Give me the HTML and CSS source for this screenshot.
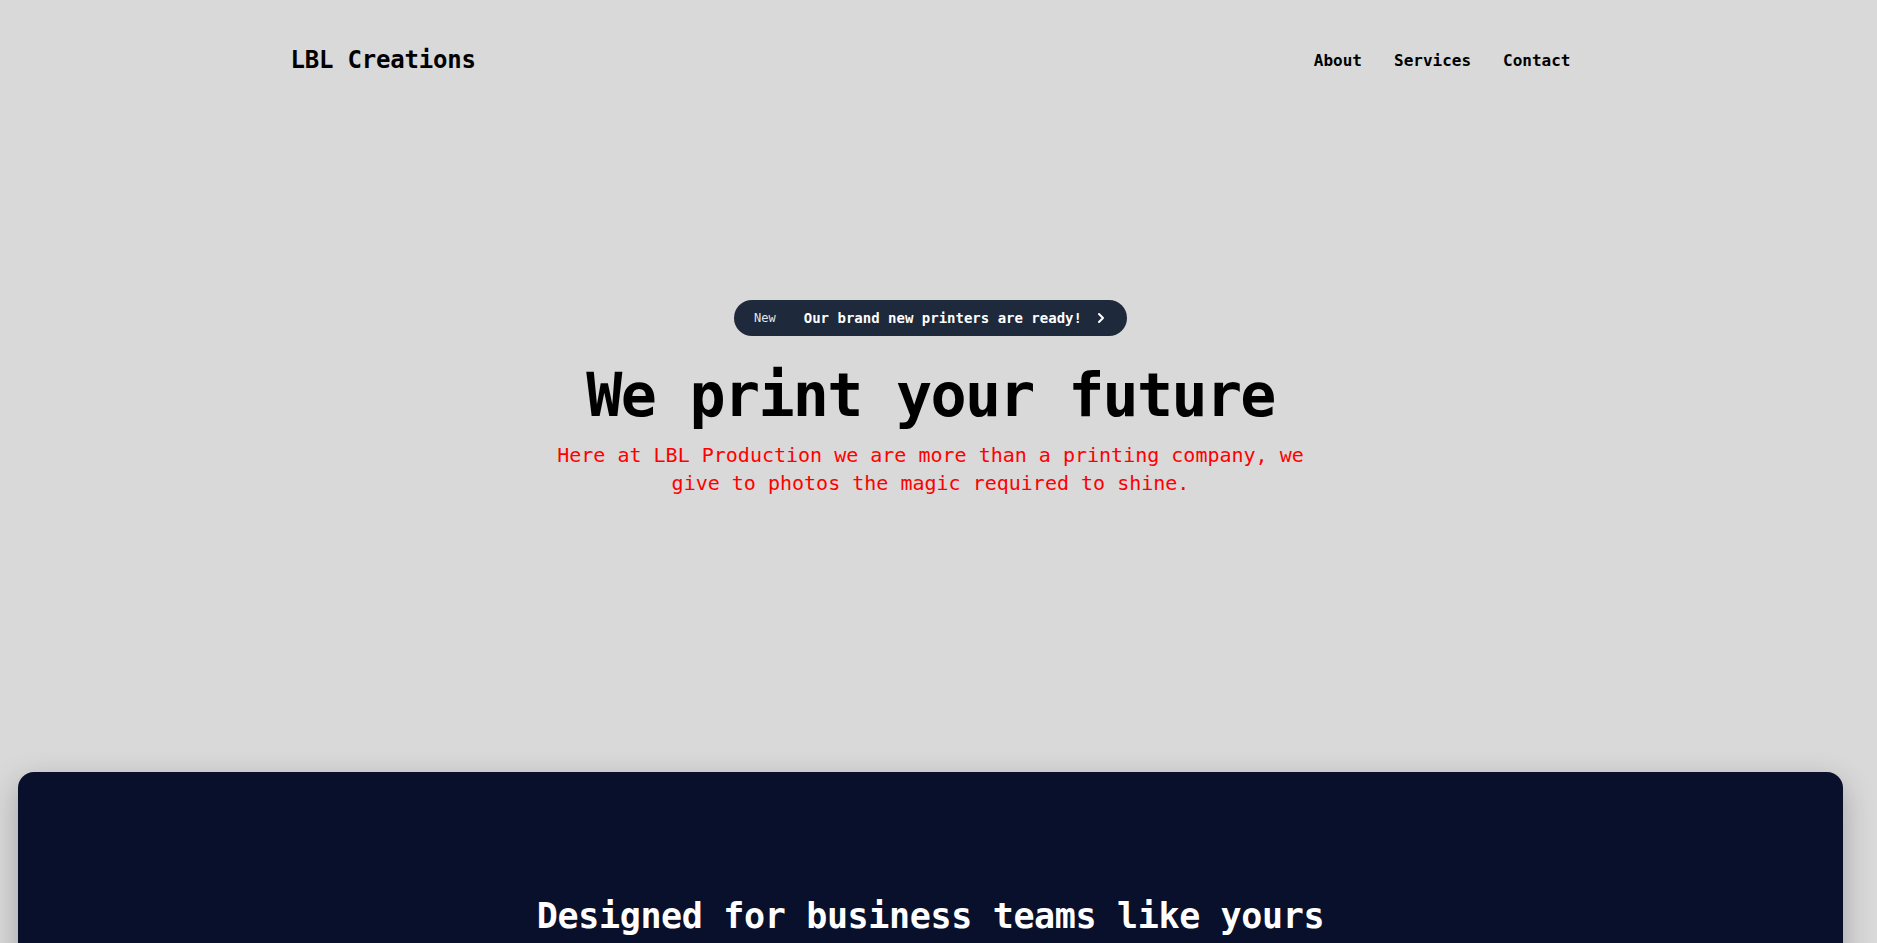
FILE: index.html
```html
<!DOCTYPE html>
<html lang="en">
<head>
<meta charset="utf-8">
<title>LBL Creations</title>
<link rel="stylesheet" href="styles.css">
</head>
<body>
<div class="page">
  <header class="site-header">
    <div class="logo">LBL Creations</div>
    <nav class="nav">
      <a href="#" class="nav-link">About</a>
      <a href="#" class="nav-link">Services</a>
      <a href="#" class="nav-link">Contact</a>
    </nav>
  </header>

  <section class="hero">
    <a href="#" class="badge">
      <span class="badge-tag">New</span>
      <span class="badge-text">Our brand new printers are ready!</span>
      <svg class="badge-chevron" width="8" height="12" viewBox="0 0 8 12" aria-hidden="true">
        <path d="M2 2 L6 6 L2 10" fill="none" stroke="#ffffff" stroke-width="2" stroke-linecap="round" stroke-linejoin="round"/>
      </svg>
    </a>
    <h1 class="hero-title">We print your future</h1>
    <p class="hero-sub">Here at LBL Production we are more than a printing company, we give to photos the magic required to shine.</p>
  </section>

  <section class="features">
    <h2 class="features-title">Designed for business teams like yours</h2>
  </section>
</div>
</body>
</html>
```

FILE: styles.css
```css
html, body {
  margin: 0;
  padding: 0;
  overflow: hidden;
}

body {
  background: #d9d9d9;
  font-family: "DejaVu Sans Mono", "Liberation Mono", monospace;
  color: #000;
}

.page {
  width: calc(100% - 16px);
}

.site-header {
  max-width: 1280px;
  margin: 0 auto;
  height: 120px;
  display: flex;
  align-items: center;
  justify-content: space-between;
}

.logo {
  font-size: 24px;
  font-weight: bold;
  letter-spacing: -0.2px;
}

.nav {
  display: flex;
  gap: 32px;
}

.nav-link {
  color: #000;
  text-decoration: none;
  font-size: 16px;
  font-weight: 600;
}

.hero {
  height: 652px;
  box-sizing: border-box;
  padding-top: 180px;
  display: flex;
  flex-direction: column;
  align-items: center;
}

.badge {
  display: inline-flex;
  align-items: center;
  height: 36px;
  box-sizing: border-box;
  padding: 0 22px 0 20px;
  background: #1e293b;
  border-radius: 18px;
  text-decoration: none;
  color: #fff;
}

.badge-tag {
  font-size: 12px;
  color: #e2e8f0;
  margin-right: 28px;
}

.badge-text {
  font-size: 14px;
  font-weight: 600;
  color: #fff;
  margin-right: 15px;
}

.badge-chevron {
  display: block;
}

.hero-title {
  margin: 23px 0 0;
  font-size: 60px;
  line-height: 72px;
  font-weight: bold;
  letter-spacing: -1.7px;
}

.hero-sub {
  margin: 10px 0 0;
  max-width: 760px;
  text-align: center;
  color: #ff0000;
  font-size: 20px;
  line-height: 28px;
}

.features {
  margin: 0 18px;
  min-height: 600px;
  background: #08102b;
  border-radius: 16px;
  box-shadow: 0 10px 30px rgba(0, 0, 0, 0.25);
  padding-top: 122px;
  box-sizing: border-box;
}

.features-title {
  margin: 0;
  text-align: center;
  color: #fff;
  font-size: 35px;
  line-height: 44px;
  font-weight: bold;
  letter-spacing: -0.35px;
}
```
